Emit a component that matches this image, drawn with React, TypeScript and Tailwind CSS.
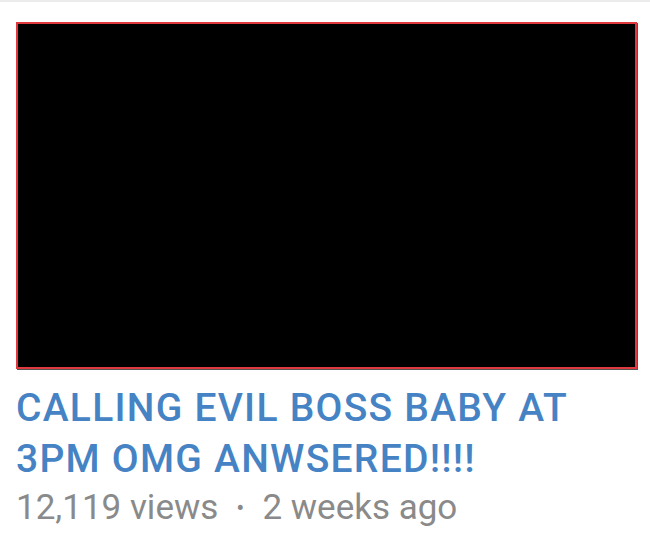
import React from 'react';

export default function App() {
  return (
    <div className="w-[650px] h-[539px] bg-white overflow-hidden border-t-2 border-[#ececec]" style={{ fontFamily: 'Roboto, "Liberation Sans", sans-serif' }}>
      <div className="pl-4 pt-5">
        <div className="w-[621px] h-[347px] bg-black border-2 border-[#e03a3e] shadow-[1px_1px_0_#555]" />
        <div className="mt-[14px] text-[39px] leading-[51px] font-medium text-[#4683c4] tracking-[1.25px]">
          <div>CALLING EVIL BOSS BABY AT</div>
          <div>3PM OMG ANWSERED!!!!</div>
        </div>
        <div className="flex items-center text-[35px] leading-[40px] text-[#8a8a8a] mt-[3px]">
          <span>12,119 views</span>
          <span className="mx-[18px] text-[24px]">•</span>
          <span>2 weeks ago</span>
        </div>
      </div>
    </div>
  );
}
